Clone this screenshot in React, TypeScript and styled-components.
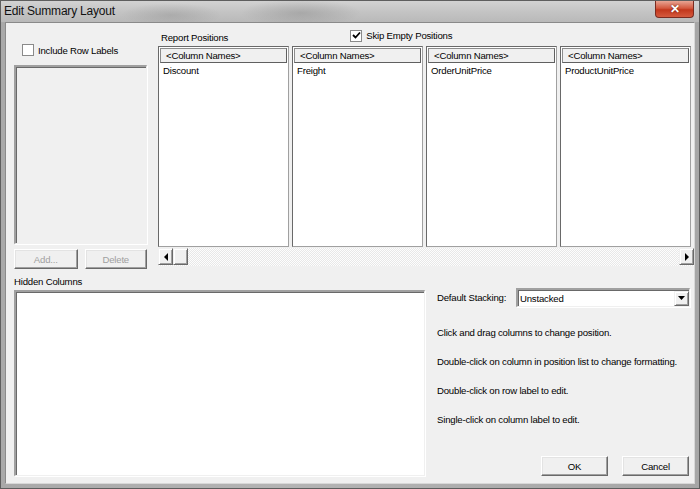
import React from "react";
import styled, { createGlobalStyle } from "styled-components";

const Global = createGlobalStyle`
  html, body { margin: 0; padding: 0; background: #8c8c8c; }
  body { font-family: "Liberation Sans", Arial, sans-serif; font-size: 9.6px; letter-spacing: -0.2px; color: #000; }
  * { box-sizing: border-box; }
`;

const Window = styled.div`
  width: 700px;
  height: 489px;
  display: flex;
  flex-direction: column;
  background: linear-gradient(90deg, #a9a9a9 0%, #b4b4b4 40%, #a6a6a6 100%);
  border: 1px solid #5e5e5e;
  overflow: hidden;
`;

const TitleBar = styled.div`
  height: 21px;
  display: flex;
  align-items: flex-start;
  justify-content: space-between;
  padding-left: 3px;
  background:
    radial-gradient(ellipse 60px 14px at 300px 12px, rgba(120,120,120,0.35), transparent),
    radial-gradient(ellipse 50px 12px at 170px 14px, rgba(110,110,110,0.25), transparent),
    linear-gradient(180deg, #d2d2d2 0%, #c4c4c4 50%, #b9b9b9 100%);
`;

const Title = styled.span`
  font-family: "Liberation Sans", Arial, sans-serif;
  font-size: 12px;
  letter-spacing: -0.2px;
  line-height: 20px;
  color: #111;
`;

const CloseBtn = styled.div`
  width: 39px;
  height: 17px;
  margin-right: 5px;
  border: 1px solid #7a2b20;
  border-top: none;
  border-radius: 0 0 4px 4px;
  background: linear-gradient(180deg, #e8a493 0%, #d3593f 45%, #c2371c 55%, #d55a3e 100%);
  display: flex;
  align-items: center;
  justify-content: center;
  color: #fff;
  font-weight: bold;
  font-size: 12px;
  text-shadow: 0 0 2px #5a1508;
`;

const FrameBody = styled.div`
  flex: 1;
  display: flex;
  padding: 0 4px 4px 4px;
`;

const Client = styled.div`
  flex: 1;
  background: #f0f0f0;
  border-top: 1px solid #8a8a8a;
  border-left: 1px solid #8a8a8a;
  border-right: 1px solid #d8d8d8;
  border-bottom: 1px solid #d8d8d8;
  display: flex;
  flex-direction: column;
  padding-left: 8px;
  overflow: hidden;
`;

const TopSection = styled.div`
  display: flex;
  height: 246px;
`;

const LeftPane = styled.div`
  width: 133px;
  flex-shrink: 0;
  display: flex;
  flex-direction: column;
`;

const CheckRow = styled.label<{ $top: number; $left: number }>`
  display: flex;
  align-items: center;
  gap: 4px;
  margin-top: ${(p) => p.$top}px;
  margin-left: ${(p) => p.$left}px;
  height: 13px;
  white-space: nowrap;
`;

const CheckBox = styled.span`
  width: 12px;
  height: 12px;
  background: #fff;
  border: 1px solid #8a8a8a;
  display: flex;
  align-items: center;
  justify-content: center;
`;

const Sunken = styled.div<{ $white?: boolean }>`
  background: ${(p) => (p.$white ? "#fff" : "#f0f0f0")};
  border-top: 2px solid #a0a0a0;
  border-left: 2px solid #a0a0a0;
  border-right: 1px solid #f0f0f0;
  border-bottom: 1px solid #f0f0f0;
  box-shadow: inset 1px 1px 0 #696969, 1px 1px 0 #fff;
`;

const RowList = styled(Sunken)`
  margin-top: 8px;
  height: 182px;
`;

const ButtonRow = styled.div`
  display: flex;
  gap: 7px;
  margin-top: 5px;
`;

const Button = styled.button<{ $w: number; $disabled?: boolean }>`
  width: ${(p) => p.$w}px;
  height: 20px;
  padding: 0;
  background: #f0f0f0;
  font-family: "Liberation Sans", Arial, sans-serif;
  font-size: 9.6px;
  letter-spacing: -0.2px;
  color: ${(p) => (p.$disabled ? "#a0a0a0" : "#000")};
  border-top: 1px solid #fff;
  border-left: 1px solid #fff;
  border-right: 1px solid #696969;
  border-bottom: 1px solid #696969;
  box-shadow: inset -1px -1px 0 #a0a0a0, inset 1px 1px 0 #e3e3e3;
`;

const RightPane = styled.div`
  flex: 1;
  margin-left: 11px;
  display: flex;
  flex-direction: column;
  overflow: hidden;
`;

const HeaderRow = styled.div`
  height: 23px;
  display: flex;
  align-items: flex-end;
`;

const ReportLabel = styled.span`
  margin-left: 3px;
  margin-bottom: 3px;
`;

const SkipWrap = styled.div`
  margin-left: 122px;
  margin-bottom: 4px;
`;

const Columns = styled.div`
  display: flex;
  gap: 3px;
  height: 201px;
`;

const ColList = styled.div`
  flex: 0 0 131px;
  background: #fff;
  border-top: 1px solid #696969;
  border-left: 1px solid #696969;
  border-right: 1px solid #a0a0a0;
  border-bottom: 1px solid #a0a0a0;
  padding: 1px;
`;

const ColHeader = styled.div`
  height: 15px;
  background: #f0f0f0;
  border: 1px solid #8c8c8c;
  border-right-color: #606060;
  border-bottom-color: #606060;
  padding-left: 5px;
  line-height: 13px;
  white-space: nowrap;
`;

const ColItem = styled.div`
  padding-left: 3px;
  line-height: 16px;
  white-space: nowrap;
`;

const ScrollBar = styled.div`
  height: 18px;
  margin-top: 1px;
  display: flex;
  background-color: #fff;
  background-image: repeating-conic-gradient(#e8e8e8 0% 25%, #fdfdfd 0% 50%);
  background-size: 2px 2px;
`;

const ScrollBtn = styled.div<{ $push?: boolean }>`
  width: 15px;
  height: 17px;
  background: #f0f0f0;
  border-top: 1px solid #f0f0f0;
  border-left: 1px solid #f0f0f0;
  border-right: 1px solid #696969;
  border-bottom: 1px solid #696969;
  box-shadow: inset 1px 1px 0 #fff, inset -1px -1px 0 #a0a0a0;
  display: flex;
  align-items: center;
  justify-content: center;
  margin-left: ${(p) => (p.$push ? "auto" : "0")};
`;

const BottomSection = styled.div`
  display: flex;
  flex: 1;
`;

const HiddenPane = styled.div`
  width: 411px;
  flex-shrink: 0;
  display: flex;
  flex-direction: column;
`;

const HiddenLabel = styled.div`
  margin-top: 7px;
  height: 14px;
`;

const HiddenList = styled(Sunken)`
  height: 186px;
`;

const InfoPane = styled.div`
  flex: 1;
  margin-left: 12px;
  display: flex;
  flex-direction: column;
  min-width: 0;
`;

const StackRow = styled.div`
  display: flex;
  align-items: center;
  margin-top: 19px;
  padding-right: 4px;
`;

const Select = styled(Sunken)`
  width: 174px;
  height: 19px;
  margin-left: auto;
  display: flex;
  align-items: center;
  justify-content: space-between;
  padding-left: 2px;
`;

const DropBtn = styled(ScrollBtn)`
  width: 15px;
  height: 15px;
`;

const Hint = styled.div<{ $first?: boolean }>`
  margin-top: ${(p) => (p.$first ? 20 : 17)}px;
  height: 12px;
  line-height: 12px;
  white-space: nowrap;
`;

const Actions = styled.div`
  margin-top: auto;
  margin-bottom: 7px;
  display: flex;
  gap: 14px;
  padding-left: 104px;
`;

const Tri = ({ dir }: { dir: "left" | "right" | "down" }) => {
  const pts =
    dir === "left" ? "4,0 4,8 0,4" : dir === "right" ? "0,0 0,8 4,4" : "0,0 7,0 3.5,4";
  const w = dir === "down" ? 7 : 4;
  const h = dir === "down" ? 4 : 8;
  return (
    <svg width={w} height={h} viewBox={`0 0 ${w} ${h}`}>
      <polygon points={pts} fill="#000" />
    </svg>
  );
};

const Check = () => (
  <svg width="9" height="9" viewBox="0 0 9 9">
    <path d="M1 4 L3.5 6.5 L8 1.5" stroke="#000" strokeWidth="1.8" fill="none" />
  </svg>
);

const columns = ["Discount", "Freight", "OrderUnitPrice", "ProductUnitPrice"];

const hints = [
  "Click and drag columns to change position.",
  "Double-click on column in position list to change formatting.",
  "Double-click on row label to edit.",
  "Single-click on column label to edit.",
];

export default function App() {
  return (
    <>
      <Global />
      <Window>
        <TitleBar>
          <Title>Edit Summary Layout</Title>
          <CloseBtn>✕</CloseBtn>
        </TitleBar>
        <FrameBody>
          <Client>
            <TopSection>
              <LeftPane>
                <CheckRow $top={21} $left={8}>
                  <CheckBox />
                  Include Row Labels
                </CheckRow>
                <RowList />
                <ButtonRow>
                  <Button $w={64} $disabled>Add...</Button>
                  <Button $w={63} $disabled>Delete</Button>
                </ButtonRow>
              </LeftPane>
              <RightPane>
                <HeaderRow>
                  <ReportLabel>Report Positions</ReportLabel>
                  <SkipWrap>
                    <CheckRow $top={0} $left={0}>
                      <CheckBox>
                        <Check />
                      </CheckBox>
                      Skip Empty Positions
                    </CheckRow>
                  </SkipWrap>
                </HeaderRow>
                <Columns>
                  {columns.map((c) => (
                    <ColList key={c}>
                      <ColHeader>&lt;Column Names&gt;</ColHeader>
                      <ColItem>{c}</ColItem>
                    </ColList>
                  ))}
                </Columns>
                <ScrollBar>
                  <ScrollBtn>
                    <Tri dir="left" />
                  </ScrollBtn>
                  <ScrollBtn />
                  <ScrollBtn $push>
                    <Tri dir="right" />
                  </ScrollBtn>
                </ScrollBar>
              </RightPane>
            </TopSection>
            <BottomSection>
              <HiddenPane>
                <HiddenLabel>Hidden Columns</HiddenLabel>
                <HiddenList $white />
              </HiddenPane>
              <InfoPane>
                <StackRow>
                  <span>Default Stacking:</span>
                  <Select $white>
                    <span>Unstacked</span>
                    <DropBtn>
                      <Tri dir="down" />
                    </DropBtn>
                  </Select>
                </StackRow>
                {hints.map((h, i) => (
                  <Hint key={h} $first={i === 0}>
                    {h}
                  </Hint>
                ))}
                <Actions>
                  <Button $w={67}>OK</Button>
                  <Button $w={67}>Cancel</Button>
                </Actions>
              </InfoPane>
            </BottomSection>
          </Client>
        </FrameBody>
      </Window>
    </>
  );
}
